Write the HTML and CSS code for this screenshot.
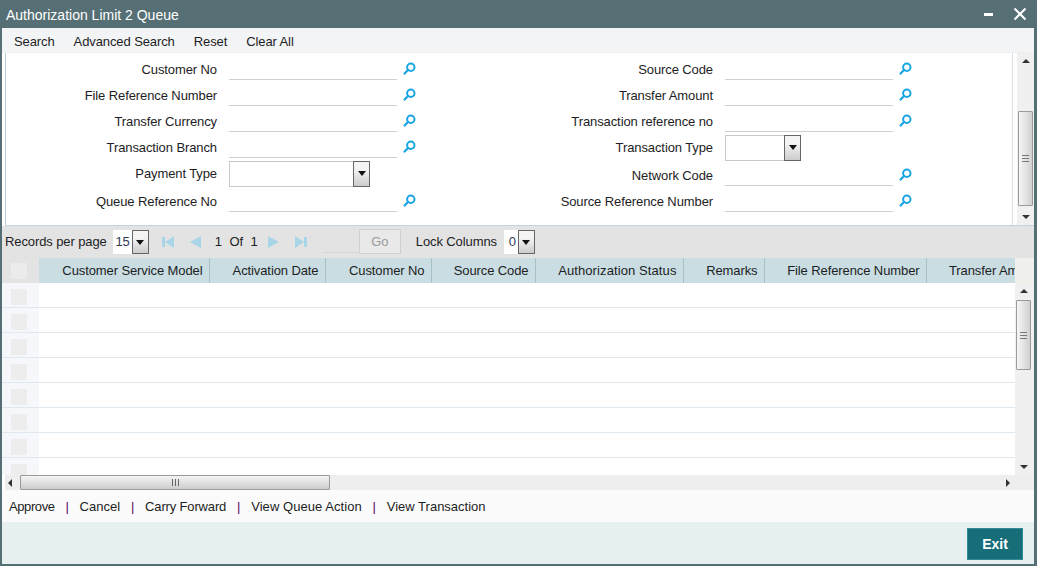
FILE: index.html
```html
<!DOCTYPE html>
<html lang="en">
<head>
<meta charset="utf-8">
<title>Authorization Limit 2 Queue</title>
<link rel="stylesheet" href="styles.css">
</head>
<body>
<svg class="defs" width="0" height="0" aria-hidden="true">
  <symbol id="lens" viewBox="0 0 13 13">
    <circle cx="7.8" cy="5.2" r="3.7" fill="none" stroke="#1aa5e3" stroke-width="2"/>
    <path d="M5 8 L1.6 11.6" fill="none" stroke="#1aa5e3" stroke-width="2.2" stroke-linecap="round"/>
  </symbol>
</svg>
<main class="window">
  <header class="titlebar">
    <h1 class="title">Authorization Limit 2 Queue</h1>
    <div class="winctl">
      <svg class="min" width="11" height="11" viewBox="0 0 11 11"><rect x="1" y="4" width="9" height="3" fill="#fff"/></svg>
      <svg class="close" width="14" height="14" viewBox="0 0 14 14"><path d="M1.5 1.5 L12.5 12.5 M12.5 1.5 L1.5 12.5" stroke="#fff" stroke-width="2" fill="none"/></svg>
    </div>
  </header>
  <nav class="toolbar">
    <span>Search</span><span>Advanced Search</span><span>Reset</span><span>Clear All</span>
  </nav>
  <section class="formarea">
    <div class="form">
      <div class="col">
        <div class="row"><label>Customer No</label><span class="inp"></span><svg class="lens"><use href="#lens"/></svg></div>
        <div class="row"><label>File Reference Number</label><span class="inp"></span><svg class="lens"><use href="#lens"/></svg></div>
        <div class="row"><label>Transfer Currency</label><span class="inp"></span><svg class="lens"><use href="#lens"/></svg></div>
        <div class="row"><label>Transaction Branch</label><span class="inp"></span><svg class="lens"><use href="#lens"/></svg></div>
        <div class="row tall"><label>Payment Type</label><span class="sel wide"><i class="ddb"><b class="tri"></b></i></span></div>
        <div class="row"><label>Queue Reference No</label><span class="inp"></span><svg class="lens"><use href="#lens"/></svg></div>
      </div>
      <div class="col">
        <div class="row"><label>Source Code</label><span class="inp"></span><svg class="lens"><use href="#lens"/></svg></div>
        <div class="row"><label>Transfer Amount</label><span class="inp"></span><svg class="lens"><use href="#lens"/></svg></div>
        <div class="row"><label>Transaction reference no</label><span class="inp"></span><svg class="lens"><use href="#lens"/></svg></div>
        <div class="row tall"><label>Transaction Type</label><span class="sel"><i class="ddb"><b class="tri"></b></i></span></div>
        <div class="row"><label>Network Code</label><span class="inp"></span><svg class="lens"><use href="#lens"/></svg></div>
        <div class="row"><label>Source Reference Number</label><span class="inp"></span><svg class="lens"><use href="#lens"/></svg></div>
      </div>
    </div>
    <div class="vbar formbar">
      <span class="arrow up"></span>
      <span class="vthumb"><span class="grip"></span></span>
      <span class="arrow down"></span>
    </div>
  </section>
  <section class="pager">
    <span>Records per page</span>
    <span class="mini"><em>15</em><i class="ddb"><b class="tri"></b></i></span>
    <span class="navs">
      <svg width="12" height="12" viewBox="0 0 12 12"><path d="M0 1h3v10H0z M12 0v12L3 6z" fill="#a9d6e6"/></svg>
      <svg class="gap1" width="11" height="12" viewBox="0 0 11 12"><path d="M11 0v12L0 6z" fill="#a9d6e6"/></svg>
    </span>
    <span class="count"><span>1</span><span>Of</span><span>1</span></span>
    <span class="navs right">
      <svg width="11" height="12" viewBox="0 0 11 12"><path d="M0 0v12L11 6z" fill="#a9d6e6"/></svg>
      <svg class="gap1" width="12" height="12" viewBox="0 0 12 12"><path d="M12 1H9v10h3z M0 0v12L9 6z" fill="#a9d6e6"/></svg>
    </span>
    <span class="pageinp"></span>
    <span class="gobtn">Go</span>
    <span class="lock">Lock Columns</span>
    <span class="mini lockbox"><em>0</em><i class="ddb"><b class="tri"></b></i></span>
  </section>
  <section class="grid">
    <div class="gridmain">
      <div class="thead">
        <div class="hcheck"><span class="box"></span></div>
        <div class="th c1">Customer Service Model</div>
        <div class="th c2">Activation Date</div>
        <div class="th c3">Customer No</div>
        <div class="th c4">Source Code</div>
        <div class="th c5">Authorization Status</div>
        <div class="th c6">Remarks</div>
        <div class="th c7">File Reference Number</div>
        <div class="th c8">Transfer Amount</div>
      </div>
      <div class="tbody">
        <div class="tr"><div class="cb"><span class="box"></span></div></div>
        <div class="tr"><div class="cb"><span class="box"></span></div></div>
        <div class="tr"><div class="cb"><span class="box"></span></div></div>
        <div class="tr"><div class="cb"><span class="box"></span></div></div>
        <div class="tr"><div class="cb"><span class="box"></span></div></div>
        <div class="tr"><div class="cb"><span class="box"></span></div></div>
        <div class="tr"><div class="cb"><span class="box"></span></div></div>
        <div class="tr last"><div class="cb"><span class="box"></span></div></div>
      </div>
    </div>
    <div class="gridside">
      <div class="corner"></div>
      <div class="vbar gridbar">
        <span class="arrow up"></span>
        <span class="vthumb"><span class="grip"></span></span>
        <span class="arrow down"></span>
      </div>
    </div>
  </section>
  <div class="hbar">
    <span class="arrow left"></span>
    <span class="hthumb"><span class="hgrip"></span></span>
    <span class="hspace"></span>
    <span class="arrow rightarrow"></span>
  </div>
  <div class="actions">
    <span class="tight-a">Approve</span><i>|</i><span>Cancel</span><i>|</i><span class="tight-b">Carry Forward</span><i>|</i><span class="wide-c">View Queue Action</span><i>|</i><span>View Transaction</span>
  </div>
  <footer class="footer"><span class="exit">Exit</span></footer>
</main>
</body>
</html>
```
FILE: styles.css
```css
* { box-sizing: border-box; }
html, body { margin: 0; padding: 0; }
body { width: 1037px; height: 566px; overflow: hidden; font-family: "Liberation Sans", Arial, sans-serif; font-size: 13px; letter-spacing: -0.1px; color: #1d1d24; background: #fff; }
.defs { display: block; height: 0; }
.window { width: 1037px; height: 566px; display: flex; flex-direction: column; border-left: 2px solid #566f75; border-right: 3px solid #566f75; border-bottom: 2px solid #566f75; background: #fff; }

.titlebar { flex: 0 0 28px; margin: 0 -3px 0 -2px; padding: 2px 10px 0 6px; background: #566f75; color: #fff; display: flex; align-items: center; justify-content: space-between; }
.title { margin: 0; font-size: 14px; font-weight: 400; letter-spacing: 0; }
.winctl { display: flex; align-items: center; gap: 19px; margin-top: -2px; }

.toolbar { flex: 0 0 25px; background: #f3f4f6; display: flex; align-items: center; gap: 19px; padding: 2px 0 0 12px; border-bottom: 1px solid #eeeeee; }

.formarea { flex: 0 0 173px; display: flex; border-left: 1px solid #b9cdd6; margin-left: 3px; border-bottom: 1px solid #c6d3dc; background: #fff; }
.form { flex: 0 0 1007px; height: 172px; display: flex; border-right: 1px solid #d7e1e7; padding-top: 3px; }
.col { flex: 0 0 496px; display: flex; flex-direction: column; }
.row { height: 26px; display: flex; align-items: flex-start; flex-shrink: 0; }
.row.tall { height: 28px; }
.row label { flex: 0 0 211px; padding-top: 6.5px; text-align: right; white-space: nowrap; line-height: 14px; }
.inp { flex: 0 0 168px; height: 24px; margin-left: 12px; border-bottom: 1px solid #cfcfcf; }
.lens { width: 13px; height: 13px; margin: 6px 0 0 6px; }

.sel { flex: 0 0 76px; height: 26px; margin: 1px 0 0 12px; border: 1px solid #c9c9c9; display: flex; justify-content: flex-end; background: #fff; }
.sel.wide { flex-basis: 141px; }
.ddb { width: 17px; display: flex; align-items: flex-start; justify-content: center; border: 1px solid #666; background: linear-gradient(#f4f4f4 30%, #cccccc); margin: -1px -1px -1px 0; padding-top: 9px; }
.tri { width: 0; height: 0; border-left: 4.5px solid transparent; border-right: 4.5px solid transparent; border-top: 5px solid #111; }

.vbar { display: flex; flex-direction: column; align-items: center; background: #f0f0f0; }
.formbar { flex: 0 0 17px; margin-left: 4px; height: 172px; padding: 0 1px; }
.gridbar { flex: 1; }
.arrow { display: block; width: 0; height: 0; flex-shrink: 0; }
.arrow.up { border-left: 4px solid transparent; border-right: 4px solid transparent; border-bottom: 4px solid #333; margin-top: 6px; }
.arrow.down { border-left: 4px solid transparent; border-right: 4px solid transparent; border-top: 4px solid #333; margin-bottom: 6px; }
.vthumb { width: 15px; border: 1px solid #9a9a9a; border-radius: 1px; background: linear-gradient(90deg, #f6f6f6, #d0d0d0); display: flex; align-items: center; justify-content: center; }
.formbar .vthumb { height: 97px; margin: 48px 0 9px; }
.gridbar .vthumb { height: 70px; margin: 7px 0 95px; }
.grip { width: 7px; height: 7px; border-top: 1px solid #777; border-bottom: 1px solid #777; background: linear-gradient(#777, #777) center / 100% 1px no-repeat; }

.pager { flex: 0 0 32px; background: #e3e3e3; display: flex; align-items: center; margin-left: 0; padding: 0 0 1px 3px; white-space: nowrap; }
.mini { width: 36px; height: 24px; margin-left: 6px; display: flex; background: #fff; }
.mini em { flex: 1; font-style: normal; text-align: right; padding: 4px 2px 0 0; color: #2c3a55; line-height: 15px; }
.mini .ddb { flex: 0 0 17px; margin: 0; }
.navs { display: flex; align-items: center; margin-left: 13px; }
.gap1 { margin-left: 16px; }
.count { display: flex; gap: 7.5px; margin-left: 14px; width: 45px; }
.navs.right { margin-left: 8px; }
.pageinp { width: 36px; height: 23px; margin-left: 15px; border-bottom: 1px solid #d6d6d6; }
.gobtn { width: 42px; height: 25px; margin-left: 1px; border: 1px solid #cfcfcf; background: #e9e9e9; color: #9a9a9a; text-align: center; line-height: 23px; }
.lock { margin-left: 15px; }
.lockbox { width: 31px; margin-left: 7px; }

.grid { flex: 0 0 217px; display: flex; background: #fff; overflow: hidden; }
.gridmain { flex: 0 0 1013px; width: 1013px; overflow: hidden; }
.gridside { flex: 0 0 19px; display: flex; flex-direction: column; }
.corner { flex: 0 0 25px; background: #f0f0ec; }
.gridbar { padding: 0 2px 0 0; }
.thead { display: flex; height: 25px; background: #c9dde3; }
.hcheck { flex: 0 0 37px; background: #e3e3e3; display: flex; align-items: center; padding-left: 9px; }
.hcheck .box { background: #ebebeb; }
.box { display: block; width: 16px; height: 16px; background: #ededed; }
.th { flex-shrink: 0; line-height: 25px; text-align: right; padding-right: 6.5px; border-right: 1px solid #a9bfc6; white-space: nowrap; }
.c1 { width: 171px; }
.c2 { width: 116px; }
.c3 { width: 106px; }
.c4 { width: 104px; }
.c5 { width: 148px; letter-spacing: 0.1px; }
.c6 { width: 81px; }
.c7 { width: 162px; }
.c8 { width: 88px; text-align: left; padding: 0 0 0 22px; border-right: 0; overflow: hidden; flex-shrink: 0; }
.tbody { display: flex; flex-direction: column; }
.tr { height: 25px; flex-shrink: 0; border-bottom: 1px solid #dfe8ee; }
.tr.last { border-bottom: 0; height: 17px; overflow: hidden; }
.cb { width: 37px; height: 100%; background: #f6f7fb; padding: 6px 0 0 9px; }

.hbar { flex: 0 0 15px; display: flex; align-items: center; background: #eeeeee; margin-left: 3px; padding-right: 24px; }
.arrow.left { border-top: 4px solid transparent; border-bottom: 4px solid transparent; border-right: 4px solid #333; margin-left: 3px; }
.arrow.rightarrow { border-top: 4px solid transparent; border-bottom: 4px solid transparent; border-left: 4px solid #333; }
.hthumb { width: 310px; height: 15px; margin-left: 8px; border: 1px solid #9a9a9a; border-radius: 1px; background: linear-gradient(#f4f4f4, #cdcdcd); display: flex; align-items: center; justify-content: center; }
.hgrip { width: 7px; height: 7px; background: repeating-linear-gradient(90deg, #666 0 1px, transparent 1px 3px); }
.hspace { flex: 1; }

.actions { flex: 0 0 32px; background: #fbfbfb; display: flex; align-items: center; padding-left: 7px; white-space: nowrap; letter-spacing: 0; }
.actions .tight-a { letter-spacing: -0.4px; }
.actions .tight-b { letter-spacing: -0.15px; }
.actions .wide-c { letter-spacing: 0.06px; }
.actions i { font-style: normal; color: #5a0a5a; margin: 0 10.8px; }
.footer { flex: 1; background: #e6f0f1; display: flex; justify-content: flex-end; align-items: flex-start; padding: 6px 11px 0 0; }
.exit { width: 56px; height: 32px; background: #176d78; border: 1px solid #2f8a94; color: #fff; font-size: 14px; font-weight: 700; letter-spacing: 0; text-align: center; line-height: 30px; }
```
